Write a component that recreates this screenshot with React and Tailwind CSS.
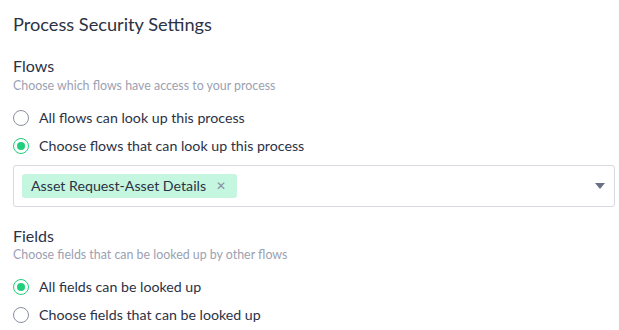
import React from 'react';

function Radio({ checked, label }) {
  return (
    <label className="flex items-center gap-[10px] h-[28px]">
      <span
        className={
          'flex items-center justify-center w-[16px] h-[16px] rounded-full border bg-white ' +
          (checked ? 'border-[#1fcf7c]' : 'border-[#8a90a0]')
        }
      >
        {checked && <span className="w-[8px] h-[8px] rounded-full bg-[#1fcf7c]" />}
      </span>
      <span className="text-[14.2px] text-[#2b3245]">{label}</span>
    </label>
  );
}

export default function App() {
  return (
    <div className="bg-white w-[619px] h-[330px] pl-[13px] pr-[4px] pt-[11px] font-['Lato',sans-serif] text-[#2b3245]">
      <h1 className="text-[18.2px] leading-[26px]">Process Security Settings</h1>

      <h2 className="mt-[19px] text-[16px] leading-[20px]">Flows</h2>
      <p className="mt-[1px] text-[12.4px] leading-[18px] text-[#9ba1b2]">Choose which flows have access to your process</p>
      <div className="mt-[9px]">
        <Radio label="All flows can look up this process" />
        <Radio checked label="Choose flows that can look up this process" />
      </div>
      <div className="mt-[5px] flex items-center h-[42px] border border-[#d7d9e0] rounded-[3px] pl-[8px] pr-[9px]">
        <span className="flex items-center h-[24px] rounded-[3px] bg-[#c5f6df] pl-[9px] pr-[11px] text-[14.2px]">
          Asset Request-Asset Details
          <span className="ml-[10px] text-[12px] text-[#8a90a0]">✕</span>
        </span>
        <span className="ml-auto w-0 h-0 border-l-[5px] border-r-[5px] border-t-[6px] border-l-transparent border-r-transparent border-t-[#6b7185]" />
      </div>

      <h2 className="mt-[19px] text-[16px] leading-[20px]">Fields</h2>
      <p className="text-[12.4px] leading-[18px] text-[#9ba1b2]">Choose fields that can be looked up by other flows</p>
      <div className="mt-[9px]">
        <Radio checked label="All fields can be looked up" />
        <Radio label="Choose fields that can be looked up" />
      </div>
    </div>
  );
}
